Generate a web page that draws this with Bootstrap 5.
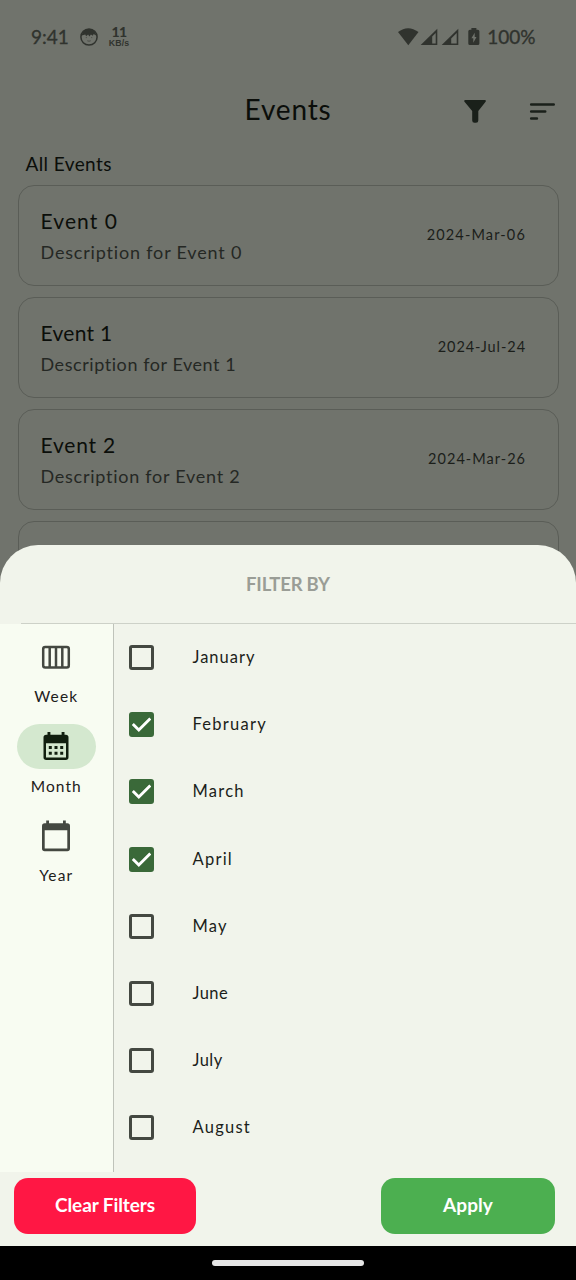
<!DOCTYPE html>
<html lang="en">
<head>
<meta charset="utf-8">
<meta name="viewport" content="width=device-width, initial-scale=1">
<title>Events</title>
<link href="https://cdn.jsdelivr.net/npm/bootstrap@5.3.0/dist/css/bootstrap.min.css" rel="stylesheet">
<style>
body{font-family:Lato,"Open Sans",sans-serif;background:#70736c;color:#0b0e0a;font-variant-ligatures:none}
.screen{width:576px;height:1280px;background:#70736c}
svg{display:block;flex:none}
/* status bar */
.statusbar{height:73px;padding:0 40.5px 0 31px;color:#30332e;font-size:19px;line-height:24px}
.clock{width:48px}
.clock span,.battery span{-webkit-text-stroke:.35px}
.battery span{margin-left:7px}
.rate{width:24px;margin-left:8px;font-weight:700}
.rate b{font-size:14px;line-height:14px;letter-spacing:-.5px}
.rate small{font-family:"Liberation Sans",sans-serif;font-size:8.8px;line-height:9px;letter-spacing:.1px}
/* app bar */
.appbar{height:72px}
.appbar h1{font-size:28px;line-height:34px;letter-spacing:.83px;margin:0;font-weight:400}
.actions{right:20px;top:24px;gap:39px}
.list-title{font-size:19px;line-height:24px;letter-spacing:.4px;height:40px;padding:7px 0 0 25.5px;margin:0;font-weight:400}
/* event cards */
.events{padding:0 17px 0 18px;gap:11px}
.event{height:101px;border:1px solid #5a5d57;border-radius:16px;background:transparent;padding:0 32px 0 21.500px;color:inherit}
.event h2{font-size:21px;line-height:26px;letter-spacing:1.1px;margin:0 0 6px;font-weight:400}
.event p{font-size:18px;line-height:24px;letter-spacing:.82px;margin:0;color:#252824}
.event time{font-size:14.5px;line-height:18px;letter-spacing:1.15px;color:#1b1e1a;margin-top:-1px}
.event.narrow h2{letter-spacing:.3px}
.event.narrow p{letter-spacing:.56px}
.event.narrow time{letter-spacing:.95px}
.event.mid h2{letter-spacing:.8px}
.event.mid p{letter-spacing:.74px}
.event.mid time{letter-spacing:1.02px}
/* filter sheet */
.sheet{height:735px;background:#f1f4eb;border-radius:38px 38px 0 0;overflow:hidden}
.sheet-head{height:78px;color:#9a9d96;padding-bottom:1px}
.sheet-head h2{font-size:18.5px;line-height:24px;letter-spacing:-.22px;font-weight:700;margin:0}
.rule{height:1px;margin-left:21px;background:#cdd1c8}
.sheet-body{height:548px}
.rail{width:113.5px;background:#f8fcf2;border-right:1px solid #bfc3ba;padding-top:10px;color:#1d201b}
.rail a{height:89.7px;color:inherit}
.pill{width:79px;height:45px;border-radius:23px}
.pill.on{background:#d4e8cf}
.rail span{font-size:15.5px;line-height:20px;letter-spacing:1.1px;margin-top:7px}
.months{color:#1b1e1a}
.month{height:67.2px;padding-left:15.500px}
.month label{font-size:16.5px;line-height:22px;letter-spacing:1.25px;margin-left:38.5px;padding-bottom:1px}
.month .snug{letter-spacing:1px}
.month .tight{letter-spacing:.45px}
.month .form-check-input{width:25px;height:25px;margin:0;border:3px solid #444841;border-radius:3px;background-color:transparent;flex:none}
.month .form-check-input:checked{background-color:#3a6939;border-color:#3a6939;background-size:25px;background-position:center;background-image:url("data:image/svg+xml,%3Csvg xmlns='http://www.w3.org/2000/svg' viewBox='0 0 25 25'%3E%3Cpath d='M3.8 12l6 6L21.300 6.500' fill='none' stroke='%23fff' stroke-width='2.9'/%3E%3C/svg%3E")}
.sheet-foot{height:74px;padding:6px 21px 0 14px}
.sheet-foot .btn{height:56px;border:0;border-radius:14px;color:#fff;font-size:19px;font-weight:700;letter-spacing:-.1px;line-height:24px;padding:0 0 2px}
.sheet-foot .clear{width:182px;background:#ff1744}
.sheet-foot .apply{width:174px;background:#4caf50;letter-spacing:.1px}
.gesture{height:34px;background:#000}
.gesture div{width:152px;height:6px;border-radius:3px;background:#e6e6e6}
</style>
</head>
<body>
<div class="screen position-relative overflow-hidden">
  <header class="statusbar d-flex align-items-center">
    <div class="clock"><span>9:41</span></div>
    <svg width="20" height="20" viewBox="0 0 20 20"><circle cx="10" cy="10" r="8.1" fill="none" stroke="currentColor" stroke-width="1.5"/><path d="M2.800 8.500C3.400 4 6.500 2 10 2s6.600 2 7.200 6.500l-2.600-1.400-.7 1.700-2-1.400-1.500 2-1.300-2-2 1.800-.8-1.700z" fill="currentColor"/><path d="M6.800 10.600h1M12.200 10.600h1M8.300 13.800q1.700.8 3.400 0" fill="none" stroke="currentColor" stroke-width=".6"/></svg>
    <div class="rate d-flex flex-column align-items-center"><b>11</b><small>KB/s</small></div>
    <div class="battery ms-auto d-flex align-items-center">
      <svg width="82" height="20" viewBox="0 0 82 20" fill="currentColor"><path d="M0 5Q10-2.600 20.500 5L10.300 18.200z"/><path d="M39.300 1.800V18H22.700zM37.700 6v10.400h-3.500V9.500z" fill-rule="evenodd"/><path d="M60.300 1.800V18H43.700zM58.700 6v10.400h-5.500V11.500z" fill-rule="evenodd"/><path d="M73.400 1h5v1.700h1.400q1.600 0 1.600 1.600v12.100q0 1.600-1.600 1.600h-7.900q-1.600 0-1.600-1.600V4.300q0-1.600 1.600-1.600h1.500zm3.300 4.800-3.300 5.500h1.900v4.400l3.200-5.600h-1.800z" fill-rule="evenodd"/></svg>
      <span>100%</span>
    </div>
  </header>

  <nav class="appbar position-relative d-flex justify-content-center align-items-center">
    <h1>Events</h1>
    <div class="actions position-absolute d-flex align-items-center">
      <svg width="28" height="28" viewBox="0 0 28 28" fill="#1a201a"><path d="M4.400 3h19.300q2 0 .9 1.800L17.300 14v9.500q0 2.300-2.300 2.300h-1.500q-2.300 0-2.300-2.300V14L3.500 4.800Q2.400 3 4.400 3z"/></svg>
      <svg width="28" height="28" viewBox="0 0 28 28" fill="none" stroke="#1a201a" stroke-width="2.600" stroke-linecap="round"><path d="M3.200 7.500h22.500M3.200 14.500h14M3.200 21.500h5.700"/></svg>
    </div>
  </nav>

  <h2 class="list-title">All Events</h2>
  <main class="events d-flex flex-column">
    <article class="card event flex-row align-items-center justify-content-between"><div><h2>Event 0</h2><p>Description for Event 0</p></div><time>2024-Mar-06</time></article>
    <article class="card event narrow flex-row align-items-center justify-content-between"><div><h2>Event 1</h2><p>Description for Event 1</p></div><time>2024-Jul-24</time></article>
    <article class="card event mid flex-row align-items-center justify-content-between"><div><h2>Event 2</h2><p>Description for Event 2</p></div><time>2024-Mar-26</time></article>
    <article class="card event"></article>
  </main>

  <section class="sheet position-absolute bottom-0 start-0 w-100 d-flex flex-column">
    <div class="sheet-head d-flex align-items-center justify-content-center"><h2>FILTER BY</h2></div>
    <div class="rule"></div>
    <div class="sheet-body d-flex">
      <nav class="rail d-flex flex-column">
        <a class="d-flex flex-column align-items-center text-decoration-none"><div class="pill d-flex align-items-center justify-content-center">
          <svg width="34" height="34" viewBox="0 0 34 34" fill="none" stroke="#444841" stroke-width="2.500"><rect x="4.200" y="6.900" width="25.600" height="20.600" rx="2"/><path d="M10.700 7v20M17 7v20M23.300 7v20"/></svg></div><span>Week</span></a>
        <a class="d-flex flex-column align-items-center text-decoration-none"><div class="pill on d-flex align-items-center justify-content-center">
          <svg width="34" height="34" viewBox="0 0 34 34" fill="#111f0f"><path d="M8.500 3h2.900v2.800h11.200V3h2.900v2.800h1.300q2.700 0 2.700 2.700v19.700q0 2.700-2.700 2.700H7.200q-2.700 0-2.700-2.700V8.500q0-2.700 2.700-2.700h1.300zM7 14.300v14.100h20V14.300zM9.800 17h3v3h-3zM15.500 17h3v3h-3zM21.200 17h3v3h-3zM9.800 22.700h3v3h-3zM15.500 22.700h3v3h-3zM21.200 22.700h3v3h-3z" fill-rule="evenodd"/></svg></div><span>Month</span></a>
        <a class="d-flex flex-column align-items-center text-decoration-none"><div class="pill d-flex align-items-center justify-content-center">
          <svg width="34" height="34" viewBox="0 0 34 34" fill="#444841"><path d="M7.200 1.500H10v2.800h14V1.500h2.800v2.800h1.500q2.700 0 2.700 2.700v22.500q0 2.700-2.700 2.700H5.700Q3 32.200 3 29.500V7q0-2.700 2.700-2.700h1.500zM5.700 11.200v18.300h22.600V11.200z" fill-rule="evenodd"/></svg></div><span>Year</span></a>
      </nav>
      <div class="months flex-grow-1">
        <div class="month d-flex align-items-center"><input class="form-check-input" type="checkbox" id="m1"><label class="snug" for="m1">January</label></div>
        <div class="month d-flex align-items-center"><input class="form-check-input" type="checkbox" id="m2" checked><label for="m2">February</label></div>
        <div class="month d-flex align-items-center"><input class="form-check-input" type="checkbox" id="m3" checked><label for="m3">March</label></div>
        <div class="month d-flex align-items-center"><input class="form-check-input" type="checkbox" id="m4" checked><label for="m4">April</label></div>
        <div class="month d-flex align-items-center"><input class="form-check-input" type="checkbox" id="m5"><label for="m5">May</label></div>
        <div class="month d-flex align-items-center"><input class="form-check-input" type="checkbox" id="m6"><label class="tight" for="m6">June</label></div>
        <div class="month d-flex align-items-center"><input class="form-check-input" type="checkbox" id="m7"><label class="tight" for="m7">July</label></div>
        <div class="month d-flex align-items-center"><input class="form-check-input" type="checkbox" id="m8"><label for="m8">August</label></div>
      </div>
    </div>
    <div class="sheet-foot d-flex justify-content-between align-items-start">
      <button class="btn clear" type="button">Clear Filters</button>
      <button class="btn apply" type="button">Apply</button>
    </div>
    <div class="gesture d-flex align-items-center justify-content-center"><div></div></div>
  </section>
</div>
</body>
</html>
